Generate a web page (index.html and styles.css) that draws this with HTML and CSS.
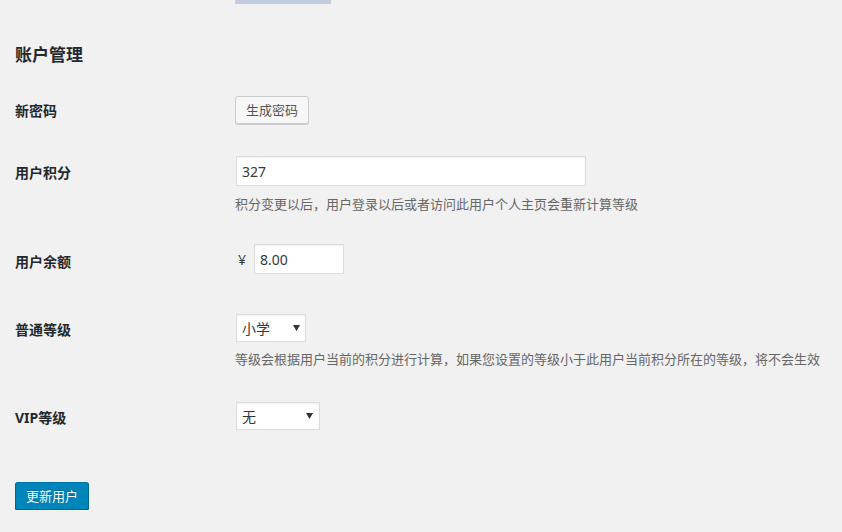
FILE: index.html
```html
<!DOCTYPE html>
<html lang="zh-CN">
<head>
<meta charset="utf-8">
<title>账户管理</title>
<link rel="stylesheet" href="styles.css">
</head>
<body>
<div class="page">
  <div class="topbar"></div>
  <h2 class="title">账户管理</h2>

  <div class="row row-pass">
    <div class="label">新密码</div>
    <div class="field">
      <button type="button" class="btn">生成密码</button>
    </div>
  </div>

  <div class="row row-points">
    <div class="label">用户积分</div>
    <div class="field">
      <input class="input input-wide" type="text" value="327">
      <p class="desc">积分变更以后，用户登录以后或者访问此用户个人主页会重新计算等级</p>
    </div>
  </div>

  <div class="row row-balance">
    <div class="label">用户余额</div>
    <div class="field field-inline">
      <span class="currency">¥</span>
      <input class="input input-short" type="text" value="8.00">
    </div>
  </div>

  <div class="row row-level">
    <div class="label">普通等级</div>
    <div class="field">
      <span class="select select-level">
        <select><option>小学</option></select>
        <svg class="arrow" width="7" height="6" viewBox="0 0 7 6"><path d="M0 0H7L3.5 6Z" fill="#333"/></svg>
      </span>
      <p class="desc desc-level">等级会根据用户当前的积分进行计算，如果您设置的等级小于此用户当前积分所在的等级，将不会生效</p>
    </div>
  </div>

  <div class="row row-vip">
    <div class="label">VIP等级</div>
    <div class="field">
      <span class="select select-vip">
        <select><option>无</option></select>
        <svg class="arrow" width="7" height="6" viewBox="0 0 7 6"><path d="M0 0H7L3.5 6Z" fill="#333"/></svg>
      </span>
    </div>
  </div>

  <div class="submit">
    <button type="button" class="btn btn-primary">更新用户</button>
  </div>
</div>
</body>
</html>
```

FILE: styles.css
```css
html, body {
  margin: 0;
  padding: 0;
  background: #f1f1f1;
}

body {
  font-family: "Noto Sans", "Noto Sans CJK SC", sans-serif;
  color: #23282d;
  font-size: 13px;
}

.page {
  padding: 0 15px;
}

.topbar {
  margin-left: 220px;
  width: 96px;
  height: 4px;
  background: #c3cbdf;
}

.title {
  margin: 40px 0 15px;
  font-size: 17px;
  line-height: 22px;
  font-weight: 700;
  color: #23282d;
}

.row {
  display: grid;
  grid-template-columns: 220px 1fr;
  align-items: start;
}

.label {
  font-size: 14px;
  line-height: 18px;
  font-weight: 700;
  color: #23282d;
}

.field {
  display: flex;
  flex-direction: column;
  align-items: flex-start;
}

.field-inline {
  flex-direction: row;
  align-items: center;
}

/* per-row spacing */
.row-pass .label { padding-top: 21px; }
.row-pass .field { padding: 15px 0 16px; }

.row-points .label { padding-top: 24px; }
.row-points .field { padding: 16px 0 15px; }

.row-balance .label { padding-top: 24px; }
.row-balance .field { padding: 15px 0 15px; }

.row-level .label { padding-top: 32px; }
.row-level .field { padding: 25px 0 15px; }

.row-vip .label { padding-top: 25px; }
.row-vip .field { padding: 18px 0 0; }

.submit {
  margin-top: 52px;
}

.btn {
  box-sizing: border-box;
  height: 28px;
  margin: 0;
  padding: 0 10px;
  font-family: "Noto Sans CJK SC", sans-serif;
  font-size: 13px;
  line-height: 26px;
  color: #555;
  background: #f7f7f7;
  border: 1px solid #ccc;
  border-radius: 3px;
  box-shadow: 0 1px 0 #ccc;
  cursor: pointer;
}

.btn-primary {
  color: #fff;
  background: #0085ba;
  border-color: #0073aa #006799 #006799;
  box-shadow: 0 1px 0 #006799;
  text-shadow: 0 -1px 1px #006799;
}

.input {
  box-sizing: border-box;
  height: 30px;
  margin: 0 0 0 1px;
  padding: 0 5px;
  font-family: "Noto Sans", "Noto Sans CJK SC", sans-serif;
  font-size: 14px;
  color: #32373c;
  background: #fff;
  border: 1px solid #ddd;
  border-radius: 0;
  box-shadow: inset 0 1px 2px rgba(0, 0, 0, 0.07);
  outline: none;
}

.input-wide {
  width: 350px;
}

.input-short {
  width: 90px;
  margin-left: 0;
}

.currency {
  width: 19px;
  padding-left: 3px;
  box-sizing: border-box;
  font-size: 14px;
  color: #32373c;
}

.desc {
  margin: 8px 0 0;
  font-family: "Noto Sans CJK SC", sans-serif;
  font-size: 13px;
  line-height: 20px;
  color: #666;
  white-space: nowrap;
}

.desc-level {
  margin-top: 7px;
}

.select {
  position: relative;
  display: inline-block;
  margin-left: 1px;
}

.select select {
  box-sizing: border-box;
  display: block;
  height: 28px;
  margin: 0;
  padding: 0 5px;
  font-family: "Noto Sans CJK SC", sans-serif;
  font-size: 14px;
  color: #32373c;
  background: #fff;
  border: 1px solid #ddd;
  border-radius: 0;
  box-shadow: inset 0 1px 2px rgba(0, 0, 0, 0.07);
  -webkit-appearance: none;
  appearance: none;
  outline: none;
}

.select-level select { width: 70px; }
.select-vip select { width: 84px; }

.select .arrow {
  position: absolute;
  top: 11px;
  pointer-events: none;
}

.select-level .arrow { right: 6px; }
.select-vip .arrow { right: 7px; }
```
